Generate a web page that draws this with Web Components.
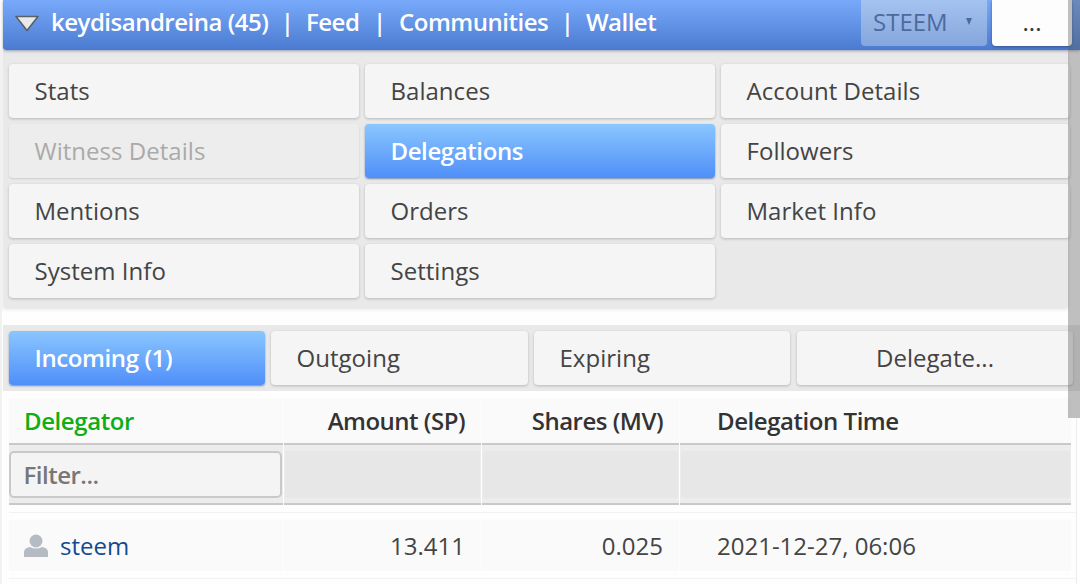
<!DOCTYPE html>
<html><head><meta charset="utf-8">
<style>
html,body{margin:0;padding:0;background:#fefefe;width:1080px;height:584px;overflow:hidden;font-family:"Open Sans",sans-serif;}
</style></head><body>
<app-shell>
<top-bar></top-bar>
<menu-panel>
<menu-btn>Stats</menu-btn><menu-btn>Balances</menu-btn><menu-btn>Account Details</menu-btn>
<menu-btn disabled>Witness Details</menu-btn><menu-btn active>Delegations</menu-btn><menu-btn>Followers</menu-btn>
<menu-btn>Mentions</menu-btn><menu-btn>Orders</menu-btn><menu-btn>Market Info</menu-btn>
<menu-btn>System Info</menu-btn><menu-btn>Settings</menu-btn>
</menu-panel>
<tab-panel>
<menu-btn active>Incoming (1)</menu-btn><menu-btn>Outgoing</menu-btn><menu-btn>Expiring</menu-btn><menu-btn center>Delegate...</menu-btn>
</tab-panel>
<deleg-table></deleg-table>
<over-scroll></over-scroll>
</app-shell>
<script>
function def(name, css, html){
  customElements.define(name, class extends HTMLElement{
    constructor(){super();const s=this.attachShadow({mode:"open"});s.innerHTML=`<style>${css}</style>${html}`;}
  });
}
def("app-shell",`:host{display:block;position:relative;width:1080px;height:584px;overflow:hidden;}
:host::before{content:"";position:absolute;left:0;top:50px;bottom:0;width:2px;background:#f1f1f1;}
:host::after{content:"";position:absolute;left:1076px;top:418px;bottom:0;width:1px;background:#ececec;}`,`<slot></slot>`);
def("top-bar",`
:host{display:flex;align-items:flex-start;box-sizing:border-box;height:50px;margin-left:3px;
 background:linear-gradient(#78a9fa,#4a7bd0);box-shadow:0 1px 3px rgba(60,80,120,.5);border-radius:0 0 0 3px;position:relative;z-index:1;color:#fff;}
.nav{display:flex;align-items:center;height:42px;font-size:24px;font-weight:600;letter-spacing:-.5px;white-space:nowrap;margin-left:12px;flex:1;}
.tri{width:24px;height:17px;margin-right:12px;margin-top:4px;flex:none;}
.sep{margin:0 12.5px;}
.sep.w{margin:0 13.5px;}
.sel{box-sizing:border-box;width:126px;height:46px;background:linear-gradient(#a5c3f0,#85a6dc);border-radius:0 0 4px 4px;color:#4d6a9c;font-size:24px;display:flex;align-items:center;padding:0 0 3px 12px;margin-right:5px;position:relative;}
.sel i{position:absolute;right:15px;top:18px;width:0;height:0;border:3.5px solid transparent;border-top:7px solid #4d6a9c;border-bottom:0;}
.more{box-sizing:border-box;width:80px;height:46px;margin-right:8px;background:#fdfdfd;border-radius:0 0 4px 4px;box-shadow:0 1px 3px rgba(40,50,90,.55);color:#333;font-size:24px;display:flex;justify-content:center;align-items:flex-start;padding-top:10px;line-height:24px;}
`,`<div class="nav"><svg class="tri" viewBox="0 0 24 17"><path d="M1 1.5 H23 L12 15.5 Z" fill="#e9e9e9" stroke="#5a5f68" stroke-width="1.6" stroke-linejoin="round"/></svg><span>keydisandreina (45)</span><span class="sep">|</span><span>Feed</span><span class="sep w">|</span><span>Communities</span><span class="sep">|</span><span>Wallet</span></div>
<div class="sel">STEEM<i></i></div><div class="more">...</div>`);
def("menu-panel",`:host{display:grid;grid-template-columns:350px 350px 349px;grid-auto-rows:54px;gap:6px;box-sizing:border-box;height:257px;margin:0 12px 0 3px;padding:14px 0 0 6px;background:#e9e9e9;box-shadow:0 2px 4px rgba(0,0,0,.12);}`,`<slot></slot>`);
def("tab-panel",`:host{display:grid;grid-template-columns:256px 257px 256px 275px;grid-auto-rows:54px;column-gap:6px;box-sizing:border-box;height:66px;margin:18px 0 0 3px;padding:6px 0 0 6px;background:#e9e9e9;}`,`<slot></slot>`);
def("menu-btn",`
:host{display:flex;align-items:center;box-sizing:border-box;padding:0 0 2px 25.5px;background:#f5f5f5;border-radius:4px;box-shadow:0 1px 3px rgba(0,0,0,.22);color:#444;font-size:24px;white-space:nowrap;letter-spacing:.03px;}
:host([disabled]){color:#aaa;background:#ededed;box-shadow:0 1px 2px rgba(0,0,0,.12);}
:host([active]){color:#fff;font-weight:600;letter-spacing:-.4px;background:linear-gradient(#8ac6ff,#4f8ff8);box-shadow:0 1px 2px rgba(30,60,130,.55);}
:host([center]){justify-content:center;padding-left:0;margin:0 -2px 0 1px;}
`,`<slot></slot>`);
def("deleg-table",`
:host{display:grid;grid-template-columns:274px 197px 197px 391px;column-gap:1px;margin:7px 0 0 9px;width:1062px;font-size:24px;color:#333;}
.h{box-sizing:border-box;height:47px;background:#fafafa;border-bottom:2px solid #c9c9c9;font-weight:600;letter-spacing:-.5px;display:flex;align-items:center;padding:0 16px 0 15px;justify-content:flex-end;white-space:nowrap;}
.h.g{color:#0fae14;justify-content:flex-start;padding-left:15px;letter-spacing:-.42px;}
.h.t{justify-content:flex-start;padding-left:37px;letter-spacing:-.45px;}
.f{box-sizing:border-box;height:60px;background:#ececec;border-bottom:2px solid #c9c9c9;padding:6px 1px 5px 1px;display:flex;}
.f.first{padding-left:0;}
.b{flex:1;background:#e7e7e7;border-radius:3px;}
.i{flex:1;box-sizing:border-box;background:#f4f4f4;border:2px solid #c9c9c9;border-radius:5px;color:#777;font-weight:600;letter-spacing:-.5px;padding-left:12.5px;display:flex;align-items:center;}
.sp{grid-column:1/-1;height:1px;margin:7px -5px 7px 0;background:#f2f2f2;}
.c{box-sizing:border-box;height:51px;background:#fafafa;display:flex;align-items:center;justify-content:flex-end;padding:0 16px 0 0;color:#444;white-space:nowrap;}
.c.n{justify-content:flex-start;padding-left:15px;color:#114a92;}
.c.d{justify-content:flex-start;padding-left:37px;}
.c.n svg{width:24px;height:24px;margin-right:12px;flex:none;}
`,`<div class="h g">Delegator</div><div class="h">Amount (SP)</div><div class="h">Shares (MV)</div><div class="h t">Delegation Time</div>
<div class="f first"><div class="i">Filter...</div></div><div class="f"><div class="b"></div></div><div class="f"><div class="b"></div></div><div class="f"><div class="b"></div></div>
<div class="sp"></div>
<div class="c n"><svg viewBox="0 0 24 24"><circle cx="12" cy="7" r="6.5" fill="#b4bbc3"/><path d="M0 23 V18 Q0 14 6 13 Q12 16 18 13 Q24 14 24 18 V23 Z" fill="#b4bbc3"/></svg>steem</div><div class="c">13.411</div><div class="c">0.025</div><div class="c d">2021-12-27, 06:06</div>
<div class="sp"></div>`);
def("over-scroll",`:host{position:absolute;right:0;top:0;width:12px;height:418px;background:rgba(90,90,90,.38);z-index:5;}`,``);
</script>
</body></html>
